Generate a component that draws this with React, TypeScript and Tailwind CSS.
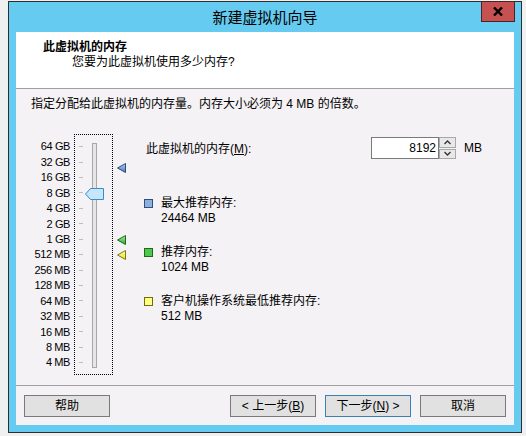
import React from "react";

const SCALE_LABELS = [
  "64 GB",
  "32 GB",
  "16 GB",
  "8 GB",
  "4 GB",
  "2 GB",
  "1 GB",
  "512 MB",
  "256 MB",
  "128 MB",
  "64 MB",
  "32 MB",
  "16 MB",
  "8 MB",
  "4 MB",
];

type MarkerProps = { light: string; dark: string; edge: string; id: string };

const Marker: React.FC<MarkerProps> = ({ light, dark, edge, id }) => (
  <svg width="9" height="10" viewBox="0 0 9 10">
    <defs>
      <linearGradient id={id} x1="0" y1="0" x2="0" y2="1">
        <stop offset="0" stopColor={light} />
        <stop offset="1" stopColor={dark} />
      </linearGradient>
    </defs>
    <polygon points="0.5,5 8.5,0.5 8.5,9.5" fill={`url(#${id})`} stroke={edge} strokeWidth="1" />
  </svg>
);

type LegendProps = { fill: string; edge: string; title: string; value: string; className?: string };

const LegendItem: React.FC<LegendProps> = ({ fill, edge, title, value, className }) => (
  <div className={`flex items-start ${className ?? ""}`}>
    <div className={`mt-[3px] h-[9px] w-[9px] border ${edge} ${fill}`} />
    <div className="ml-[8px] leading-[15px]">
      <div>{title}</div>
      <div>{value}</div>
    </div>
  </div>
);

const WizardButton: React.FC<{ children: React.ReactNode; primary?: boolean }> = ({ children, primary }) => (
  <div
    className={`flex h-[22px] w-[86px] items-center justify-center border bg-[#e1e1e1] leading-none ${
      primary ? "border-[#3c7fb1]" : "border-[#7a7a7a]"
    }`}
  >
    {children}
  </div>
);

const SpinArrow: React.FC<{ up?: boolean }> = ({ up }) => (
  <svg width="7" height="5" viewBox="0 0 7 5">
    <polyline
      points={up ? "0.5,4 3.5,1 6.5,4" : "0.5,1 3.5,4 6.5,1"}
      fill="none"
      stroke="#333"
      strokeWidth="1.3"
    />
  </svg>
);

export default function App() {
  return (
    <div className="h-[436px] w-[526px] overflow-hidden bg-[#f0f0f0] pl-[8px] pt-[1px] font-['Liberation_Sans','Noto_Sans_CJK_SC',sans-serif] text-[12px] text-black">
      <div className="relative flex h-[432px] w-[514px] flex-col border border-[#2e2e2e] bg-[#65cbf0]">
        {/* title bar */}
        <div className="flex h-[30px] items-center justify-center text-[15px] leading-none">
          新建虚拟机向导
        </div>
        <div className="absolute right-[6px] top-[-1px] flex h-[21px] w-[34px] items-center justify-center border border-[#4a2424] bg-[#c75050]">
          <svg width="10" height="9" viewBox="0 0 10 9">
            <path d="M1 0.5 L9 8.5 M9 0.5 L1 8.5" stroke="#000" strokeWidth="2.4" />
          </svg>
        </div>

        {/* client panel */}
        <div className="mx-[7px] flex h-[393px] flex-col">
          <div className="h-[57px] border-b border-[#a0a0a0] bg-white pt-[8px] leading-[15px]">
            <div className="pl-[27px] font-bold">此虚拟机的内存</div>
            <div className="pl-[56px]">您要为此虚拟机使用多少内存?</div>
          </div>

          <div className="flex h-[296px] flex-col bg-[#f5f2f5] pt-[8px]">
            <div className="pl-[15px] leading-[15px]">
              指定分配给此虚拟机的内存量。内存大小必须为 4 MB 的倍数。
            </div>

            <div className="mt-[22px] flex pl-[4px]">
              {/* scale labels */}
              <div className="w-[50px] pt-[5px] text-right text-[11px] tracking-[-0.4px]">
                {SCALE_LABELS.map((label) => (
                  <div key={label} className="flex h-[15.43px] items-center justify-end">
                    {label}
                  </div>
                ))}
              </div>

              {/* slider */}
              <div className="relative ml-[4px] h-[241px] w-[39px] border border-dotted border-black">
                <div className="pl-[4px] pt-[4px]">
                  {SCALE_LABELS.map((label) => (
                    <div key={label} className="flex h-[15.43px] items-center">
                      <div className="h-[1px] w-[4px] bg-[#bdbdbd]" />
                    </div>
                  ))}
                </div>
                <div className="absolute left-[17px] top-[8px] h-[225px] w-[5px] border border-[#a8a8a8] bg-[#e6e6e6]" />
                <svg className="absolute left-[10px] top-[53px]" width="19" height="12" viewBox="0 0 19 12">
                  <polygon points="0.5,6 5.5,0.5 18.5,0.5 18.5,11.5 5.5,11.5" fill="#c6e6fb" stroke="#3a8ad0" />
                </svg>
              </div>

              {/* markers */}
              <div className="relative h-[241px] w-[31px]">
                <div className="absolute left-[4px] top-[29px]">
                  <Marker id="mk-blue" light="#b8d0f4" dark="#4a78b8" edge="#2a4a80" />
                </div>
                <div className="absolute left-[4px] top-[101px]">
                  <Marker id="mk-green" light="#a8f0a0" dark="#28a828" edge="#1a6a1a" />
                </div>
                <div className="absolute left-[4px] top-[116px]">
                  <Marker id="mk-yellow" light="#ffffb0" dark="#e6e020" edge="#7a7a10" />
                </div>
              </div>

              {/* right column */}
              <div className="flex flex-col">
                <div className="mt-[3px] flex h-[22px] items-center">
                  <div className="w-[227px] pl-[2px] pt-[2px]">
                    此虚拟机的内存(<span className="underline">M</span>):
                  </div>
                  <div className="flex h-[22px] w-[68px] items-center justify-end border border-[#7a7a7a] bg-white pr-[2px]">
                    8192
                  </div>
                  <div className="flex h-[22px] w-[17px] flex-col gap-[1px]">
                    <div className="flex flex-1 items-center justify-center border border-[#a8a8a8] bg-[#e8e8e8]">
                      <SpinArrow up />
                    </div>
                    <div className="flex flex-1 items-center justify-center border border-[#a8a8a8] bg-[#e8e8e8]">
                      <SpinArrow />
                    </div>
                  </div>
                  <div className="ml-[8px]">MB</div>
                </div>

                <LegendItem
                  className="mt-[37px]"
                  fill="bg-[#8fb0de]"
                  edge="border-[#2f4f80]"
                  title="最大推荐内存:"
                  value="24464 MB"
                />
                <LegendItem
                  className="mt-[19px]"
                  fill="bg-[#4cc84c]"
                  edge="border-[#1c6a1c]"
                  title="推荐内存:"
                  value="1024 MB"
                />
                <LegendItem
                  className="mt-[19px]"
                  fill="bg-[#ffff80]"
                  edge="border-[#6e6e10]"
                  title="客户机操作系统最低推荐内存:"
                  value="512 MB"
                />
              </div>
            </div>
          </div>

          {/* footer */}
          <div className="flex h-[40px] border-t border-[#a0a0a0] bg-[#f5f2f5] px-[8px] pt-[9px]">
            <WizardButton>帮助</WizardButton>
            <div className="flex-1" />
            <div className="flex gap-[9px]">
              <WizardButton>
                &lt; 上一步(<span className="underline">B</span>)
              </WizardButton>
              <WizardButton primary>
                下一步(<span className="underline">N</span>) &gt;
              </WizardButton>
              <WizardButton>取消</WizardButton>
            </div>
          </div>
        </div>
      </div>
    </div>
  );
}
